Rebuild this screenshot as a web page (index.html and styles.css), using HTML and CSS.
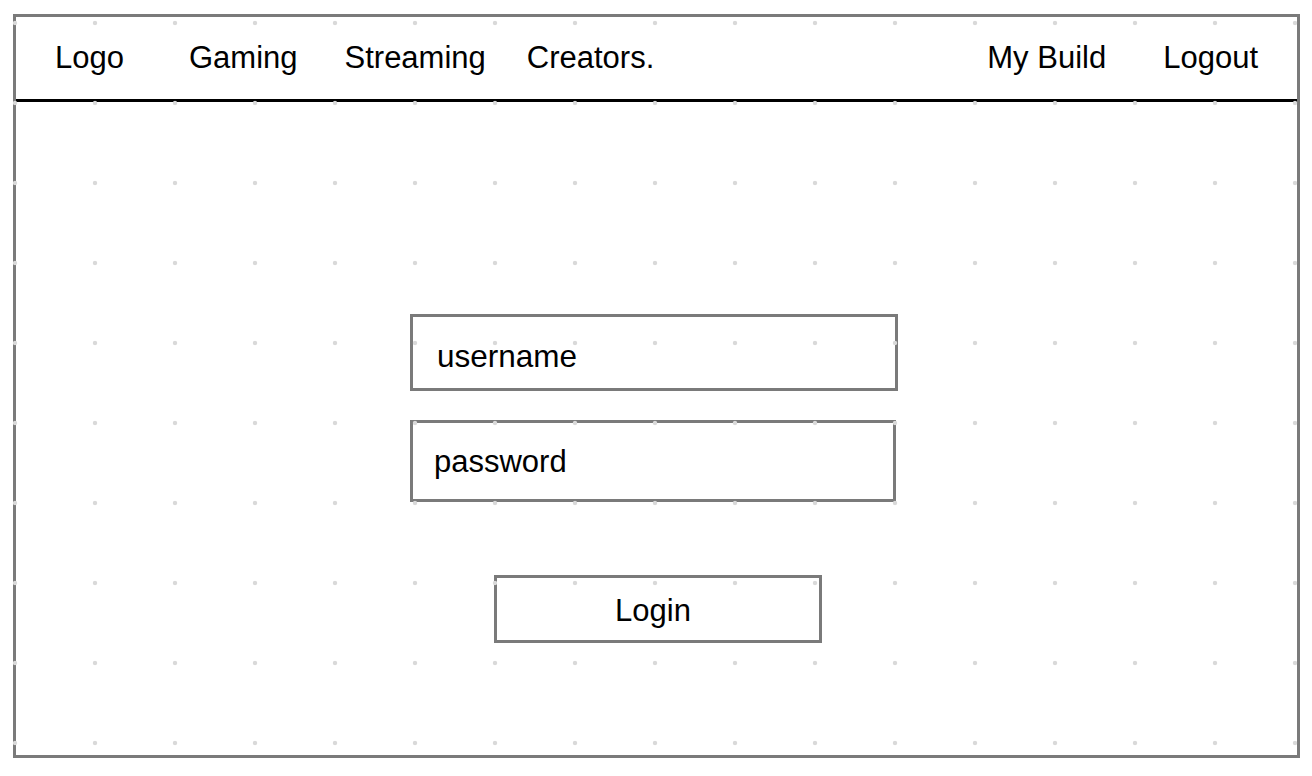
FILE: index.html
```html
<!DOCTYPE html>
<html lang="en">
<head>
<meta charset="utf-8">
<title>Login wireframe</title>
<link rel="stylesheet" href="styles.css">
</head>
<body>
<div class="frame">
  <header class="nav">
    <div class="nav-left">
      <span class="nav-item logo">Logo</span>
      <span class="nav-item gaming">Gaming</span>
      <span class="nav-item streaming">Streaming</span>
      <span class="nav-item creators">Creators.</span>
    </div>
    <div class="nav-right">
      <span class="nav-item">My Build</span>
      <span class="nav-item">Logout</span>
    </div>
  </header>
  <main class="main">
    <form class="login-form">
      <div class="field field-user">username</div>
      <div class="field field-pass">password</div>
      <div class="login-btn">Login</div>
    </form>
  </main>
</div>
<div class="grid-dots"></div>
</body>
</html>
```

FILE: styles.css
```css
html, body {
  margin: 0;
  padding: 0;
  background: #ffffff;
}

body {
  font-family: "Liberation Sans", Arial, Helvetica, sans-serif;
  color: #000000;
  width: 1312px;
  height: 776px;
  overflow: hidden;
}

.frame {
  box-sizing: border-box;
  margin: 14px 0 0 13px;
  width: 1287px;
  height: 744px;
  border: 3px solid #7a7a7a;
  display: flex;
  flex-direction: column;
}

.nav {
  box-sizing: border-box;
  height: 85px;
  padding: 23px 39px 0 39px;
  border-bottom: 3px solid #000000;
  display: flex;
  justify-content: space-between;
  align-items: flex-start;
  font-size: 31px;
  line-height: 36px;
}

.nav-left,
.nav-right {
  display: flex;
}

.gaming { margin-left: 65px; }
.streaming { margin-left: 47px; }
.creators { margin-left: 41px; }

.nav-right {
  gap: 57px;
}

.main {
  flex: 1;
  padding: 212px 0 0 394px;
}

.login-form {
  display: flex;
  flex-direction: column;
  align-items: flex-start;
  margin: 0;
}

.field {
  box-sizing: border-box;
  border: 3px solid #7a7a7a;
  line-height: 36px;
}

.field-user {
  width: 488px;
  height: 77px;
  padding: 21px 0 0 24px;
  font-size: 31.5px;
}

.field-pass {
  margin-top: 29px;
  width: 486px;
  height: 82px;
  padding: 21px 0 0 21px;
  font-size: 31px;
}

.login-btn {
  box-sizing: border-box;
  margin: 73px 0 0 84px;
  width: 328px;
  height: 68px;
  border: 3px solid #7a7a7a;
  padding: 15px 10px 0 0;
  text-align: center;
  font-size: 31px;
  line-height: 36px;
}

.grid-dots {
  position: fixed;
  inset: 0;
  pointer-events: none;
  background-image: radial-gradient(circle, #d9d9d9 0, #d9d9d9 1.8px, rgba(217,217,217,0) 2.6px);
  background-size: 80px 80px;
  background-position: -25px -17px;
}
```
